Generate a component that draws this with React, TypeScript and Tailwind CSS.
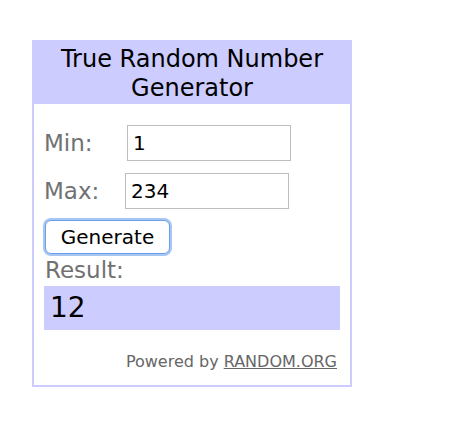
import React from 'react'

// Widget "True Random Number Generator" façon RANDOM.ORG
const verdana = "font-['DejaVu_Sans',Verdana,sans-serif]"

type RowProps = {
  label: string
  value: string
  labelWidth: string
  className?: string
}

const FieldRow = ({ label, value, labelWidth, className }: RowProps) => (
  <div className={`flex items-center ${className || ''}`}>
    <span className={`${labelWidth} ${verdana} text-[23px] leading-[28px] text-[#717171]`}>{label}</span>
    <input
      readOnly
      value={value}
      className={`h-[36px] w-[164px] border border-[#bdbdbd] bg-white px-[5px] ${verdana} text-[20px] text-black outline-none`}
    />
  </div>
)

export default function App() {
  return (
    <div className="min-h-[432px] w-full bg-white pt-[40px] pl-[32px]">
      <div className="w-[320px] border-2 border-[#ccccff] bg-white">
        {/* En-tête */}
        <div
          className={`-mt-[2px] -mx-[2px] bg-[#ccccff] pt-[5px] pb-[1px] text-center ${verdana} text-[24px] leading-[29px] text-black`}
        >
          True Random Number
          <br />
          Generator
        </div>

        <div className="px-[10px] pb-[13px]">
          <FieldRow label="Min:" value="1" labelWidth="w-[83px]" className="mt-[21px]" />
          <FieldRow label="Max:" value="234" labelWidth="w-[81px]" className="mt-[12px]" />

          <button
            className={`mt-[11px] ml-[1px] h-[34px] w-[125px] rounded-[6px] border border-[#6d9ee8] bg-white shadow-[0_0_0_2px_#a8c6f4] ${verdana} text-[20px] leading-none text-black`}
          >
            Generate
          </button>

          <div className={`mt-[2px] pl-[1px] ${verdana} text-[23px] leading-[28px] text-[#717171]`}>Result:</div>

          <div className={`mt-[2px] h-[44px] w-[296px] bg-[#ccccff] pl-[6px] ${verdana} text-[28px] leading-[44px] text-black`}>
            12
          </div>

          <div className={`mt-[22px] pr-[3px] text-right ${verdana} text-[16px] leading-[20px] text-[#666666]`}>
            Powered by <span className="underline">RANDOM.ORG</span>
          </div>
        </div>
      </div>
    </div>
  )
}
